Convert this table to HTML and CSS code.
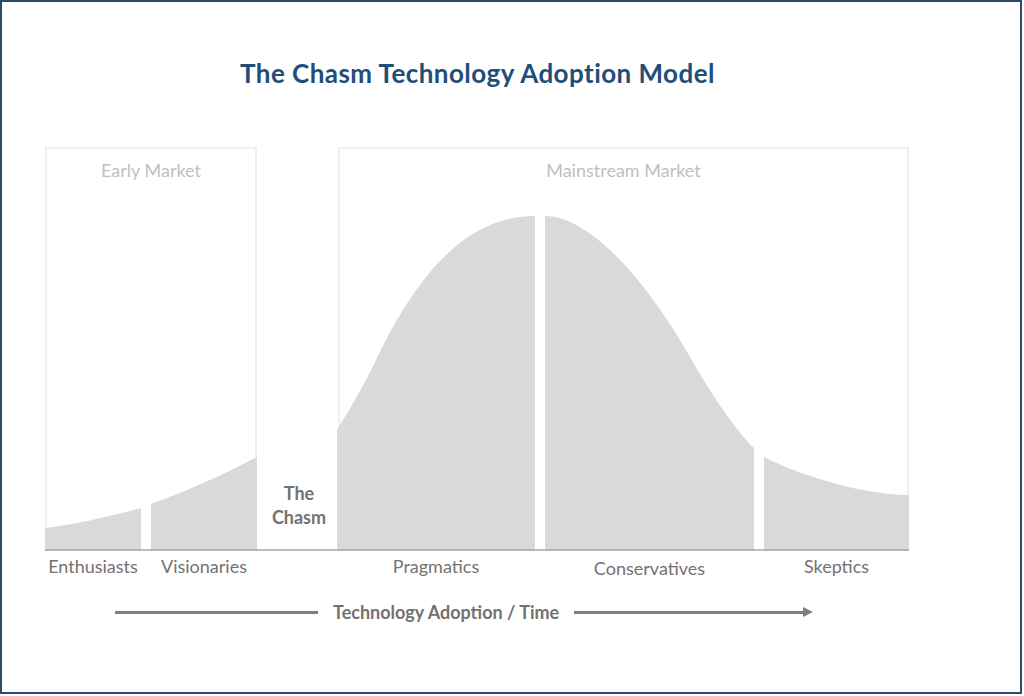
FILE: index.html
```html
<!DOCTYPE html>
<html lang="en">
<head>
<meta charset="utf-8">
<title>The Chasm Technology Adoption Model</title>
<link rel="stylesheet" href="styles.css">
</head>
<body>
<div class="frame">
  <h1 class="title">The Chasm Technology Adoption Model</h1>
  <div class="chart">
    <div class="box early"><span class="box-label">Early Market</span></div>
    <div class="chasm"><span class="chasm-label">The<br>Chasm</span></div>
    <div class="box main"><span class="box-label">Mainstream Market</span></div>
    <svg class="curve" viewBox="45 147 864 404" width="864" height="404" aria-hidden="true">
      <path class="fill" d="M45 528 C80 524 110 516 141 508 L141 551.5 L45 551.5 Z"/>
      <path class="fill" d="M151 504 C185 492 225 474 257 457 L257 551.5 L151 551.5 Z"/>
      <path class="fill" d="M337 430 C350 409 363 387 375 362 C420 267.5 470 216 535 216 L535 551.5 L337 551.5 Z"/>
      <path class="fill" d="M545 216 C595 216 655 295 690 357 C710 392 735 430 754 448 L754 551.5 L545 551.5 Z"/>
      <path class="fill" d="M764 457 C795 473 860 495 909 495 L909 551.5 L764 551.5 Z"/>
      <line class="base" x1="45" y1="550" x2="909" y2="550"/>
    </svg>
  </div>
  <div class="segments">
    <span class="seg s1">Enthusiasts</span>
    <span class="seg s2">Visionaries</span>
    <span class="seg s3">Pragmatics</span>
    <span class="seg s4">Conservatives</span>
    <span class="seg s5">Skeptics</span>
  </div>
  <div class="axis">
    <span class="axis-line left"></span>
    <span class="axis-label">Technology Adoption / Time</span>
    <span class="axis-line right"></span>
    <span class="axis-head"></span>
  </div>
</div>
</body>
</html>
```
FILE: styles.css
```css
html, body {
  margin: 0;
  padding: 0;
  background: #ffffff;
}

body {
  font-family: Lato, "Open Sans", "Liberation Sans", sans-serif;
}

.frame {
  box-sizing: border-box;
  width: 1022px;
  height: 694px;
  border: 2px solid #2e4a6a;
  background: #ffffff;
}

.title {
  margin: 56px 0 0 238px;
  font-size: 26px;
  line-height: 30px;
  font-weight: 700;
  letter-spacing: 0.45px;
  color: #1f4e79;
}

.chart {
  position: relative;
  display: flex;
  margin: 59px 0 0 43px;
  width: 864px;
  height: 404px;
}

.box {
  box-sizing: border-box;
  height: 100%;
  border: 2px solid #f0f0f0;
  border-bottom: none;
  display: flex;
  justify-content: center;
  padding-top: 11px;
}

.early {
  width: 212px;
}

.main {
  width: 571px;
}

.box-label {
  font-size: 18px;
  line-height: 20px;
  color: #bfbfbf;
}

.chasm {
  width: 81px;
  display: flex;
  flex-direction: column;
  justify-content: flex-end;
  align-items: center;
  padding-bottom: 22px;
  box-sizing: border-box;
}

.chasm-label {
  font-size: 18px;
  line-height: 24px;
  font-weight: 700;
  color: #767171;
  text-align: center;
  padding-left: 3px;
}

.curve {
  position: absolute;
  left: 0;
  top: 0;
}

.fill {
  fill: #d9d9d9;
}

.base {
  stroke: #a6a6a6;
  stroke-width: 1.5;
}

.segments {
  display: flex;
  margin: 5px 0 0 43px;
  font-size: 18px;
  line-height: 20px;
  color: #767171;
}

.seg {
  text-align: center;
  white-space: nowrap;
}

.s1 { width: 96px; margin-right: 10px; }
.s2 { width: 106px; margin-right: 80px; }
.s3 { width: 198px; margin-right: 10px; }
.s4 { width: 209px; margin-right: 10px; position: relative; top: 2px; }
.s5 { width: 145px; }

.axis {
  display: flex;
  align-items: center;
  margin: 26px 0 0 113px;
  height: 20px;
}

.axis-line {
  height: 3px;
  background: #7f7f7f;
}

.axis-line.left {
  width: 203px;
}

.axis-line.right {
  width: 229px;
}

.axis-label {
  margin: 0 15px;
  font-size: 18px;
  line-height: 20px;
  font-weight: 700;
  color: #767171;
  white-space: nowrap;
}

.axis-head {
  width: 0;
  height: 0;
  border-top: 5px solid transparent;
  border-bottom: 5px solid transparent;
  border-left: 10px solid #7f7f7f;
}
```
